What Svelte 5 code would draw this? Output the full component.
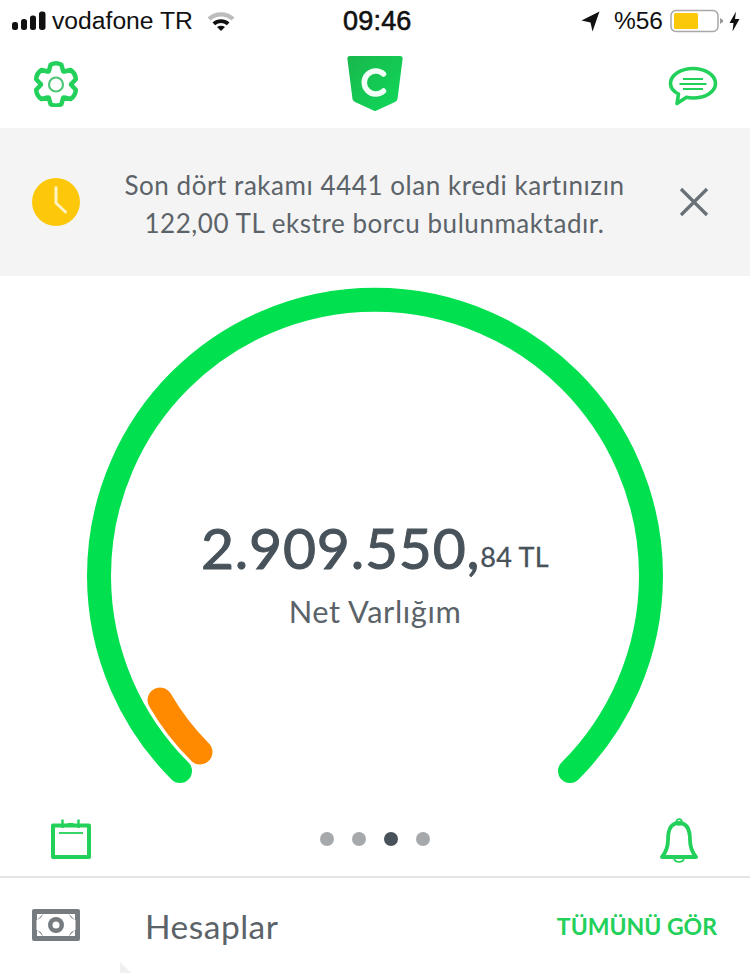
<script>
  const dots = [false, false, true, false];

  const cx = 23;
  const cy = 23.5;
  const point = (deg, r) => {
    const a = (deg * Math.PI) / 180;
    return `${(cx + r * Math.sin(a)).toFixed(2)} ${(cy - r * Math.cos(a)).toFixed(2)}`;
  };
  const gear = [0, 60, 120, 180, 240, 300]
    .map((d) => `L${point(d - 15, 20.5)} Q${point(d, 22.5)} ${point(d + 15, 20.5)} L${point(d + 27, 15.5)} Q${point(d + 30, 14.5)} ${point(d + 33, 15.5)}`)
    .join(' ')
    .replace(/^L/, 'M') + ' Z';
</script>

<div class="page">
  <div class="status">
    <div class="status-side">
      <svg class="signal" width="35" height="20" viewBox="0 0 35 20">
        <rect x="0" y="11" width="6" height="8" rx="2.5" fill="#111" />
        <rect x="9" y="8" width="6" height="11" rx="2.5" fill="#111" />
        <rect x="18" y="4.5" width="6" height="14.5" rx="2.5" fill="#111" />
        <rect x="27" y="0.500" width="6.500" height="18.500" rx="2.700" fill="#111" />
      </svg>
      <span class="carrier">vodafone TR</span>
      <svg class="wifi" width="28" height="22" viewBox="0 0 28 22">
        <path d="M0.500 7.500 C8 0.500 20 0.500 27.500 7.500 L24.500 10.500 C18 5 10 5 3.500 10.500 Z" fill="#bdbdbd" />
        <path d="M5.500 12.500 C10.500 8.200 17.500 8.200 22.500 12.500 L19.800 15.300 C16 12.300 12 12.300 8.200 15.300 Z" fill="#111" />
        <path d="M10 17 C12.500 15.300 15.500 15.300 18 17 L14 21 Z" fill="#111" />
      </svg>
    </div>
    <span class="time">09:46</span>
    <div class="status-side right">
      <svg class="arrow" width="19" height="21" viewBox="0 0 19 21">
        <path d="M0.500 9.500 L18.500 0.500 L11.500 20.500 L9.500 11.500 Z" fill="#111" />
      </svg>
      <span class="pct">%56</span>
      <svg class="battery" width="54" height="24" viewBox="0 0 54 24">
        <rect x="1" y="1.500" width="47" height="21" rx="5" fill="none" stroke="#a8a8a8" stroke-width="1.500" />
        <rect x="4" y="4" width="24" height="16" rx="1.500" fill="#fcc80a" />
        <path d="M50 9 L53 11 L53 13 L50 15 Z" fill="#999" />
      </svg>
      <svg class="bolt" width="11" height="21" viewBox="0 0 11 21">
        <path d="M7 0.500 L0.500 12 L4.500 12 L3.500 20.500 L10.500 8 L6 8 Z" fill="#111" />
      </svg>
    </div>
  </div>

  <header class="top">
    <svg width="46" height="46" viewBox="0 0 46 46">
      <path d={gear} fill="none" stroke="#22d05a" stroke-width="4.500" stroke-linejoin="round" />
      <circle cx="23" cy="23.500" r="7" fill="none" stroke="#4fc678" stroke-width="2.200" />
    </svg>
    <svg class="logo" width="56" height="56" viewBox="0 0 56 56">
      <defs>
        <linearGradient id="shield" x1="0" y1="0" x2="1" y2="1">
          <stop offset="0" stop-color="#18b84c" />
          <stop offset="1" stop-color="#10d95a" />
        </linearGradient>
      </defs>
      <path d="M3 0 H53 Q56 0 55.600 3 L50.500 43 Q50 45 48 46 L29 54.800 Q28 55.300 27 54.800 L8 46 Q6 45 5.500 43 L0.400 3 Q0 0 3 0 Z" fill="url(#shield)" />
      <path d="M36.500 18 A11.500 11.500 0 1 0 36.500 35" fill="none" stroke="#f2fff6" stroke-width="5.500" stroke-linecap="round" />
    </svg>
    <svg width="50" height="40" viewBox="0 0 50 40">
      <path d="M25 2.500 C37 2.500 47.500 9 47.500 17.500 C47.500 26 37 32 25 32 C22.500 32 20.500 31.800 18.500 31.300 L9 37.500 L10.500 28 C5.500 25.500 2.500 21.800 2.500 17.500 C2.500 9 13 2.500 25 2.500 Z" fill="none" stroke="#22d05a" stroke-width="3.600" stroke-linejoin="round" />
      <path d="M15 13 H35 M11.500 18 H38.500 M15 23 H35" stroke="#22d05a" stroke-width="1.800" />
    </svg>
  </header>

  <section class="notice">
    <svg width="48" height="48" viewBox="0 0 48 48">
      <circle cx="24" cy="24" r="24" fill="#fec80a" />
      <path d="M24 9.500 V25 L33.500 34" fill="none" stroke="#fff3c4" stroke-width="3" stroke-linecap="round" stroke-linejoin="round" />
    </svg>
    <p>Son dört rakamı 4441 olan kredi kartınızın<br />122,00 TL ekstre borcu bulunmaktadır.</p>
    <svg width="30" height="30" viewBox="0 0 30 30">
      <path d="M2 2 L28 28 M28 2 L2 28" stroke="#697178" stroke-width="3.200" />
    </svg>
  </section>

  <section class="gauge">
    <svg class="dial" width="600" height="520" viewBox="0 0 600 520">
      <path d="M105 495 A276 276 0 1 1 495 495" fill="none" stroke="#01e150" stroke-width="24" stroke-linecap="round" />
      <path d="M85 424 A248 248 0 0 0 125 476" fill="none" stroke="#ff8a00" stroke-width="25" stroke-linecap="round" />
    </svg>
    <div class="amount">
      <div class="value"><span class="big">2.909.550,</span><span class="small">84 TL</span></div>
      <div class="label">Net Varlığım</div>
    </div>
  </section>

  <div class="tools">
    <svg width="42" height="42" viewBox="0 0 42 42">
      <path d="M3 7.500 H39 V39 H3 Z" fill="none" stroke="#22d05a" stroke-width="4" stroke-linejoin="round" />
      <path d="M9 15 H33" stroke="#22d05a" stroke-width="1.800" />
      <path d="M12.500 1.500 V10 M28.500 1.500 V10" stroke="#22d05a" stroke-width="2.400" />
      <path d="M17.500 6.500 H23.500" stroke="#22d05a" stroke-width="3" />
    </svg>
    <div class="dots">
      {#each dots as on}
        <span class="dot" class:on></span>
      {/each}
    </div>
    <svg width="38" height="46" viewBox="0 0 38 46">
      <path d="M19 5 C28 5 30 13 30 22 C30 30 32 34 36 39 H2 C6 34 8 30 8 22 C8 13 10 5 19 5 Z" fill="none" stroke="#22d05a" stroke-width="3.800" stroke-linejoin="round" />
      <circle cx="19" cy="4" r="2.800" fill="none" stroke="#22d05a" stroke-width="1.800" />
      <path d="M14 41 C15.500 45 22.500 45 24 41" fill="none" stroke="#22d05a" stroke-width="1.600" />
    </svg>
  </div>

  <footer class="row">
    <svg class="cash" width="48" height="32" viewBox="0 0 48 32">
      <rect width="48" height="32" rx="2" fill="#767b7f" />
      <path d="M5 5 H11 L5 11 Z M43 5 V11 L37 5 Z M5 27 V21 L11 27 Z M43 27 H37 L43 21 Z" fill="#fff" />
      <path d="M4.500 11 C8 10 10 8 11 5 H37 C38 8 40 10 43.500 11 V21 C40 22 38 24 37 27 H11 C10 24 8 22 4.500 21 Z" fill="#fff" />
      <circle cx="24" cy="16" r="8" fill="#767b7f" />
      <circle cx="24" cy="16" r="3.500" fill="#fff" />
    </svg>
    <span class="title">Hesaplar</span>
    <span class="all">TÜMÜNÜ GÖR</span>
  </footer>
  <div class="fold"></div>
</div>

<style>
  :global(body) {
    margin: 0;
    background: #fff;
  }

  .page {
    position: relative;
    width: 750px;
    height: 973px;
    overflow: hidden;
    background: #fff;
    font-family: Lato, "Noto Sans", sans-serif;
  }

  .status {
    height: 40px;
    display: flex;
    align-items: center;
    justify-content: space-between;
    padding: 2px 10px 0 12px;
    box-sizing: border-box;
    font-family: "Liberation Sans", Arial, sans-serif;
    color: #111;
    position: relative;
  }

  .status-side {
    display: flex;
    align-items: center;
  }

  .carrier {
    font-size: 24.700px;
    margin-left: 5px;
  }

  .wifi {
    margin-left: 14px;
  }

  .time {
    position: absolute;
    left: 343px;
    top: 6px;
    font-size: 27px;
    line-height: 30px;
    font-weight: 400;
    -webkit-text-stroke: 0.600px #111;
    letter-spacing: 0.200px;
  }

  .pct {
    font-size: 24.500px;
    margin-left: 14px;
  }

  .battery {
    margin-left: 7px;
  }

  .bolt {
    margin-left: 5px;
  }

  .top {
    height: 88px;
    display: flex;
    align-items: flex-start;
    justify-content: space-between;
    padding: 0 32px 0 33px;
    box-sizing: border-box;
  }

  .top svg {
    margin-top: 21px;
  }

  .top svg:last-child {
    margin-top: 26px;
  }

  .top .logo {
    margin-top: 16px;
    margin-left: 2px;
  }

  .notice {
    height: 148px;
    background: #f4f4f4;
    display: flex;
    align-items: center;
    justify-content: space-between;
    padding: 0 41px 0 32px;
    box-sizing: border-box;
  }

  .notice p {
    margin: 3px 10px 0 0;
    text-align: center;
    font-size: 26px;
    line-height: 38px;
    color: #5b6369;
    letter-spacing: 0.550px;
  }

  .gauge {
    position: relative;
    height: 526px;
    display: flex;
    justify-content: center;
  }

  .dial {
    display: block;
  }

  .amount {
    position: absolute;
    left: 0;
    right: 0;
    top: 236px;
    text-align: center;
  }

  .value {
    color: #47525a;
    line-height: 70px;
    white-space: nowrap;
  }

  .big {
    font-size: 57px;
    letter-spacing: 0.800px;
    -webkit-text-stroke: 1px #47525a;
  }

  .small {
    font-size: 27px;
    letter-spacing: 0.300px;
    vertical-align: 2px;
    -webkit-text-stroke: 0.300px #47525a;
  }

  .label {
    font-size: 30.800px;
    line-height: 28px;
    color: #5b6369;
    letter-spacing: 0.600px;
  }

  .tools {
    height: 76px;
    display: flex;
    align-items: flex-start;
    justify-content: space-between;
    padding: 16px 52px 0 50px;
    box-sizing: border-box;
    border-bottom: 2px solid #e4e4e4;
  }

  .dots {
    display: flex;
    gap: 18px;
    margin-top: 14px;
    margin-left: -2px;
  }

  .dot {
    width: 14px;
    height: 14px;
    border-radius: 50%;
    background: #a6a9ac;
  }

  .dot.on {
    background: #47525a;
  }

  .row {
    height: 95px;
    display: flex;
    align-items: center;
    padding: 0 33px 0 32px;
    box-sizing: border-box;
  }

  .cash {
    flex: none;
    margin-top: -2px;
  }

  .title {
    margin-left: 65px;
    font-size: 33.500px;
    color: #5b6369;
    letter-spacing: 0.500px;
  }

  .all {
    margin-left: auto;
    font-size: 23px;
    font-weight: 700;
    color: #22d05a;
  }

  .fold {
    position: absolute;
    left: 120px;
    top: 962px;
    width: 11px;
    height: 11px;
    background: #f0f0f0;
    clip-path: polygon(0 0, 100% 100%, 0 100%);
  }
</style>
